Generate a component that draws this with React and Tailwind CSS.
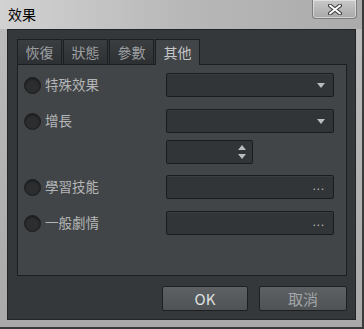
import React from 'react';

const font = { fontFamily: '"Noto Sans CJK TC", "Noto Sans", sans-serif' };

function Radio({ label }) {
  return (
    <div className="flex items-center w-[148px] pl-[6px]">
      <span className="w-[17px] h-[17px] rounded-full bg-[#2b2d2f] border border-[#1c1d1e] shadow-[inset_0_1px_2px_rgba(0,0,0,0.5)]" />
      <span className="ml-[4px] text-[13.5px] leading-none text-[#b4b6b7]">{label}</span>
    </div>
  );
}

function Field({ children, w = 'w-[168px]' }) {
  return (
    <div className={`${w} h-[24px] rounded-[2px] border border-[#1b1c1d] bg-[#323537] shadow-[inset_0_1px_0_rgba(255,255,255,0.04)] flex items-center justify-end pr-[8px]`}>
      {children}
    </div>
  );
}

const Arrow = () => (
  <svg width="8" height="5" viewBox="0 0 8 5"><path d="M0 0h8L4 5z" fill="#b9bbbc" /></svg>
);

const Dots = () => (
  <span className="text-[11px] leading-none text-[#b9bbbc] tracking-[1px] -mt-[4px]">...</span>
);

function Tab({ label, active }) {
  return (
    <div
      className={`w-[45px] flex items-center justify-center text-[14px] border border-b-0 border-[#1d1e1f] ${
        active ? 'h-[26px] bg-[#424547] text-[#c4c6c7] -mb-px z-10' : 'h-[25px] bg-gradient-to-b from-[#3b3e40] to-[#2e3133] text-[#9c9fa1]'
      }`}
    >
      {label}
    </div>
  );
}

export default function App() {
  return (
    <div style={font} className="w-[364px] h-[329px] bg-gradient-to-b from-[#bdbdbd] to-[#a9a9a9] border-r-2 border-b-2 border-[#3a3a3a] flex flex-col">
      <div className="h-[29px] flex items-start justify-between bg-gradient-to-r from-[#d2d2d2] via-[#b8b8b8] to-[#ababab]">
        <span className="pl-[8px] pt-[7px] text-[14px] leading-none text-black">效果</span>
        <div className="mr-[5px] w-[45px] h-[19px] rounded-b-[4px] border border-t-0 border-[#7d7d7d] bg-gradient-to-b from-[#c8c8c8] to-[#a8a8a8] shadow-[inset_0_0_0_1px_rgba(255,255,255,0.45)] flex items-center justify-center">
          <svg width="14" height="11" viewBox="0 0 14 11">
            <path d="M2 1.5L12 9.5M12 1.5L2 9.5" stroke="#3a3a3a" strokeWidth="4" strokeLinecap="round" />
            <path d="M2 1.5L12 9.5M12 1.5L2 9.5" stroke="#ffffff" strokeWidth="2" strokeLinecap="round" />
          </svg>
        </div>
      </div>
      <div className="mx-[7px] w-[349px] h-[291px] bg-[#35383a] border border-[#232425] flex flex-col pl-[9px] pt-[9px]">
        <div className="flex gap-px items-end">
          <Tab label="恢復" />
          <Tab label="狀態" />
          <Tab label="參數" />
          <Tab label="其他" active />
        </div>
        <div className="w-[330px] h-[212px] bg-[#424547] border border-[#1d1e1f] pt-[8px] flex flex-col">
          <div className="flex items-center h-[24px]">
            <Radio label="特殊效果" />
            <Field><Arrow /></Field>
          </div>
          <div className="flex items-center h-[24px] mt-[12px]">
            <Radio label="增長" />
            <Field><Arrow /></Field>
          </div>
          <div className="flex items-center h-[24px] mt-[7px]">
            <div className="w-[148px]" />
            <div className="w-[87px] h-[24px] rounded-[2px] border border-[#1b1c1d] bg-[#323537] flex flex-col items-end justify-center gap-[4px] pr-[6px]">
              <svg width="8" height="5" viewBox="0 0 8 5"><path d="M0 5h8L4 0z" fill="#b9bbbc" /></svg>
              <svg width="8" height="5" viewBox="0 0 8 5"><path d="M0 0h8L4 5z" fill="#b9bbbc" /></svg>
            </div>
          </div>
          <div className="flex items-center h-[24px] mt-[11px]">
            <Radio label="學習技能" />
            <Field><Dots /></Field>
          </div>
          <div className="flex items-center h-[24px] mt-[12px]">
            <Radio label="一般劇情" />
            <Field><Dots /></Field>
          </div>
        </div>
        <div className="flex justify-end gap-[11px] mt-[10px] pr-[8px]">
          <button className="w-[86px] h-[25px] rounded-[2px] border border-[#1e1f20] bg-gradient-to-b from-[#5d6163] to-[#4f5355] text-[15px] text-[#dfe1e2] leading-none">OK</button>
          <button className="w-[88px] h-[25px] rounded-[2px] border border-[#1e1f20] bg-gradient-to-b from-[#5d6163] to-[#4f5355] text-[15px] text-[#a3a6a8] leading-none">取消</button>
        </div>
      </div>
    </div>
  );
}
